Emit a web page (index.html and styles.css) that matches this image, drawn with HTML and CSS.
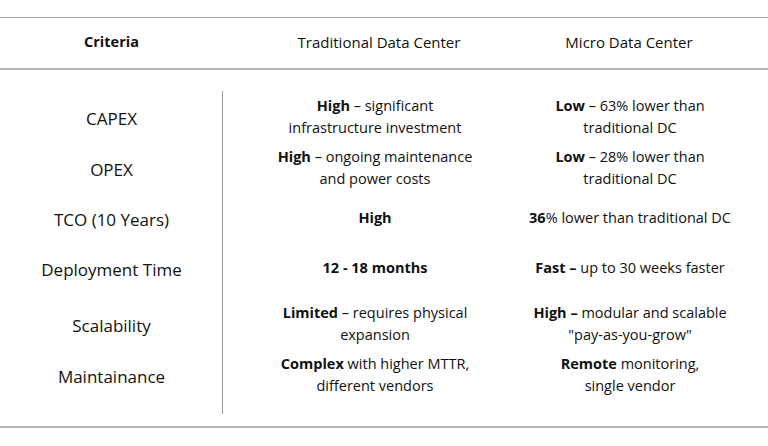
FILE: index.html
```html
<!DOCTYPE html>
<html lang="en">
<head>
<meta charset="utf-8">
<title>Traditional vs Micro Data Center</title>
<link rel="stylesheet" href="styles.css">
</head>
<body>
<div class="table">
  <div class="head">
    <div class="hc c1"><b>Criteria</b></div>
    <div class="hc c2">Traditional Data Center</div>
    <div class="hc c3">Micro Data Center</div>
  </div>
  <div class="body">
    <div class="divider"></div>

    <div class="label r1">CAPEX</div>
    <div class="cell r1"><span><b>High</b> – significant<br>infrastructure investment</span></div>
    <div class="cell r1 m"><span><b>Low</b> – 63% lower than<br>traditional DC</span></div>

    <div class="label r2">OPEX</div>
    <div class="cell r2"><span><b>High</b> – ongoing maintenance<br>and power costs</span></div>
    <div class="cell r2 m"><span><b>Low</b> – 28% lower than<br>traditional DC</span></div>

    <div class="label r3">TCO (10 Years)</div>
    <div class="cell r3"><span><b>High</b></span></div>
    <div class="cell r3 m"><span><b>36</b>% lower than traditional DC</span></div>

    <div class="label r4">Deployment Time</div>
    <div class="cell r4"><span><b>12 - 18 months</b></span></div>
    <div class="cell r4 m"><span><b>Fast –</b> up to 30 weeks faster</span></div>

    <div class="label r5">Scalability</div>
    <div class="cell r5"><span><b>Limited</b> – requires physical<br>expansion</span></div>
    <div class="cell r5 m"><span><b>High –</b> modular and scalable<br>"pay-as-you-grow"</span></div>

    <div class="label r6">Maintainance</div>
    <div class="cell r6"><span><b>Complex</b> with higher MTTR,<br>different vendors</span></div>
    <div class="cell r6 m"><span><b>Remote</b> monitoring,<br>single vendor</span></div>
  </div>
</div>
</body>
</html>
```
FILE: styles.css
```css
html, body {
  margin: 0;
  padding: 0;
  background: #ffffff;
}
body {
  font-family: "Open Sans", "Liberation Sans", sans-serif;
  font-weight: 500;
  color: #111111;
  width: 768px;
  height: 446px;
  overflow: hidden;
}
.table {
  padding-top: 17px;
}
.head {
  display: grid;
  grid-template-columns: 223px 312px 188px 45px;
  height: 50px;
  border-top: 1px solid #a8a8a8;
  border-bottom: 2px solid #b4b4b4;
  align-items: center;
}
.hc {
  text-align: center;
  font-size: 15px;
  line-height: 20px;
  white-space: nowrap;
  padding-bottom: 2px;
}
.hc.c1 {
  font-size: 14.5px;
}
.hc.c3 {
  justify-self: center;
}
.body {
  display: grid;
  grid-template-columns: 223px 304px 206px 35px;
  grid-template-rows: 52px 50px 50px 50px 62px 40px 19px;
  padding-top: 21px;
  padding-bottom: 12px;
  border-bottom: 2px solid #b4b4b4;
}
.divider {
  grid-column: 1;
  grid-row: 1 / 8;
  border-right: 1px solid #9c9c9c;
}
.label {
  grid-column: 1;
  display: flex;
  align-items: center;
  justify-content: center;
  font-size: 17px;
  padding-top: 3px;
}
.cell {
  grid-column: 2;
  display: flex;
  align-items: center;
  justify-content: center;
  text-align: center;
  font-size: 14.5px;
  line-height: 22px;
  white-space: nowrap;
}
.cell.m {
  grid-column: 3;
}
.r1 { grid-row: 1; }
.r2 { grid-row: 2; }
.r3 { grid-row: 3; }
.r4 { grid-row: 4; }
.r5 { grid-row: 5; }
.r6 { grid-row: 6; }
b {
  font-weight: 700;
}
```
